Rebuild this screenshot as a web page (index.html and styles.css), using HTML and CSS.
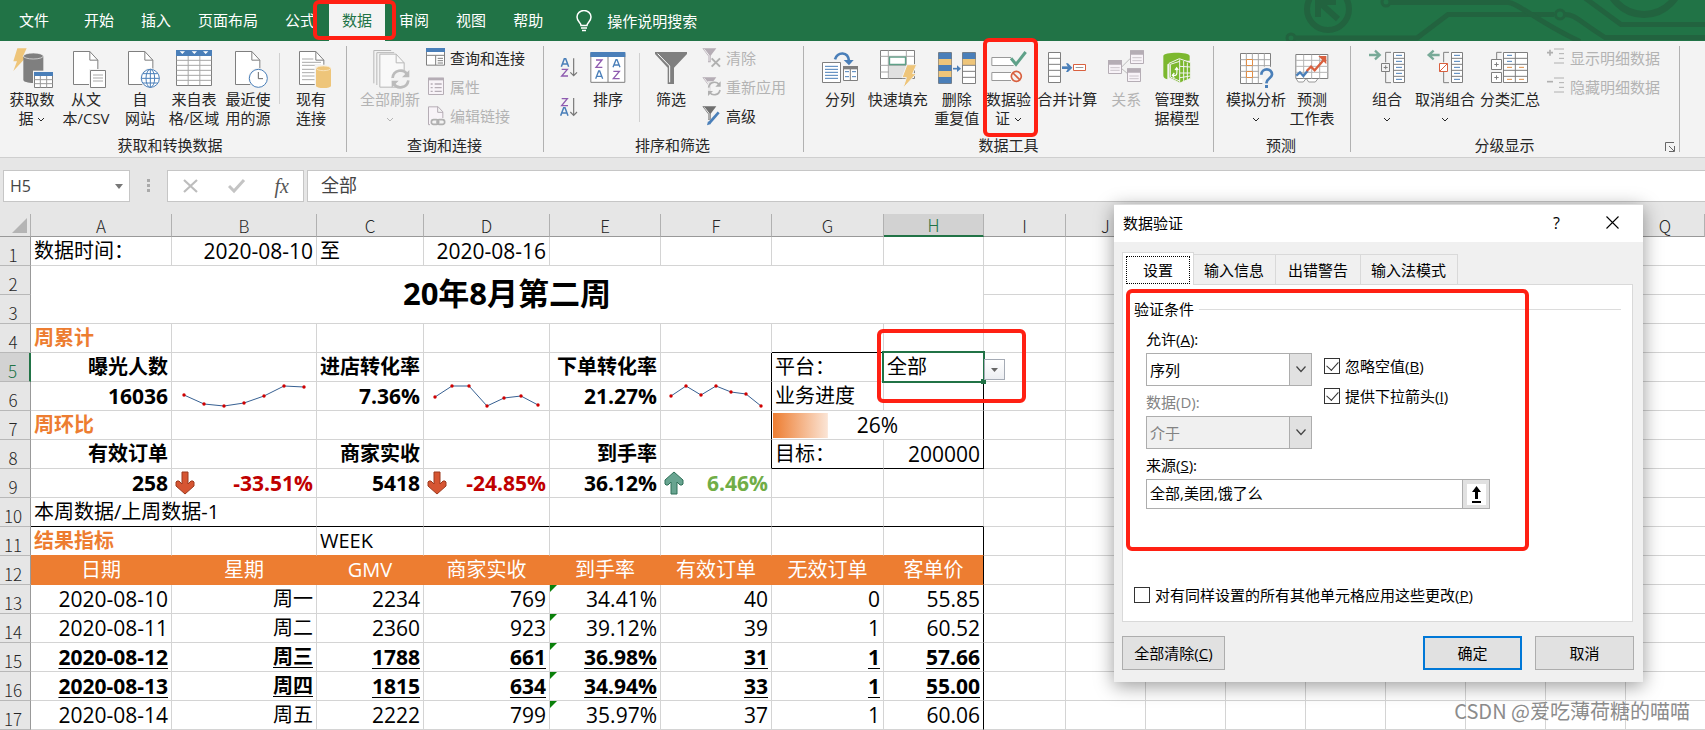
FILE: index.html
```html
<!DOCTYPE html>
<html lang="zh-CN">
<head>
<meta charset="utf-8">
<title>数据验证</title>
<link rel="stylesheet" href="styles.css">
</head>
<body>
<svg class="defs" aria-hidden="true">
  <symbol id="page" viewBox="0 0 78 104" overflow="visible"><path d="M1.5 1.5h49l24 26v73h-73z" fill="#fff" stroke="#7f7f7f" stroke-width="3"/><path d="M50.500 1.500v26h24" fill="none" stroke="#7f7f7f" stroke-width="3"/></symbol>
  <symbol id="down" viewBox="0 0 20 24"><path d="M7 1h6v12l3-3h2l1 1v4l-9 8-9-8v-4l1-1h2l3 3z" fill="#d65532" stroke="#9c3a1f"/></symbol>
  <symbol id="up" viewBox="0 0 20 24"><path d="M7 23h6V11l3 3h2l1-1V9l-9-8-9 8v4l1 1h2l3-3z" fill="#68a490" stroke="#2f7058"/></symbol>
  <symbol id="chev" viewBox="0 0 8 6"><path d="M1 1l3 3 3-3" fill="none" stroke="currentColor" stroke-width="1"/></symbol>
</svg>

<header class="menubar">
  <svg class="circuit" viewBox="0 0 430 41" aria-hidden="true">
    <g fill="none" stroke="#22633f" stroke-width="5">
      <circle cx="53" cy="9" r="21" stroke-width="6"/>
      <path d="M63 19L44 2M43 17V2h18" stroke-width="6"/>
      <circle cx="16" cy="38" r="4" stroke-width="3"/><path d="M21 38h121l31-23.500h106"/>
      <circle cx="285" cy="14.500" r="4.500" stroke-width="3"/><path d="M290 14.500c10 0 12 5 40 23h100"/>
      <circle cx="111" cy="2" r="4" stroke-width="3"/><path d="M115 2.500h118c10 0 30 20 72 39M310-2l36 26.500h84"/>
      <circle cx="369" cy="-23" r="37.500" stroke-width="7"/>
    </g>
  </svg>
  <nav class="tabs">
    <button class="tab file">文件</button>
    <button class="tab">开始</button>
    <button class="tab">插入</button>
    <button class="tab">页面布局</button>
    <button class="tab">公式</button>
    <button class="tab active">数据<span class="ring ring-tab"></span></button>
    <button class="tab">审阅</button>
    <button class="tab">视图</button>
    <button class="tab">帮助</button>
  </nav>
  <button class="tell"><svg width="16" height="22" viewBox="0 0 16 22"><path d="M5 15.500c0-3-4-4-4-8.500a7 6.500 0 0 1 14 0c0 4.500-4 5.500-4 8.500zM5 18h6M6 20.500h4" fill="none" stroke="#fff" stroke-width="1.500"/></svg>操作说明搜索</button>
</header>

<section class="ribbon">
  <div class="group g1">
    <div class="tools">
      <button class="big w54"><svg viewBox="36 144 120 120"><path d="M52 145h28l-12 26h11l-39 42 11-29H40z" fill="#eec57a"/><path d="M70 168v72c0 5 14 9 30 9h30v-81z" fill="#7f7f7f"/><ellipse cx="100" cy="168" rx="30" ry="9" fill="#7f7f7f" stroke="#f3f3f3" stroke-width="2"/><path d="M99 212h62v54H99z" fill="#f3f3f3"/><path d="M103.500 217.500h54v45h-54z" fill="#fff" stroke="#7f7f7f" stroke-width="3"/><path d="M102 216h57v12h-57z" fill="#4a7fb9"/><path d="M121 228v35M140 228v35M103 239h55M103 251h55" stroke="#999" stroke-width="3"/></svg><span>获取数<br>据 <svg class="chev"><use href="#chev"/></svg></span></button>
      <button class="big w54"><svg viewBox="198 144 120 120"><use href="#page" x="219" y="153" width="78" height="104"/><path d="M267 207h52v58h-52z" fill="#f3f3f3"/><path d="M271.500 211.500h45v51h-45z" fill="#fff" stroke="#7f7f7f" stroke-width="3"/><path d="M279 225h30M279 234h30M279 243h30" stroke="#999" stroke-width="2.500"/></svg><span>从文<br>本/CSV</span></button>
      <button class="big w54"><svg viewBox="360 144 120 120"><use href="#page" x="384" y="153" width="78" height="104"/><circle cx="451" cy="235" r="31" fill="#f3f3f3"/><g fill="#fff" stroke="#4a7fb9" stroke-width="3"><circle cx="451" cy="235" r="27"/><ellipse cx="451" cy="235" rx="13" ry="27"/><path d="M451 208v54M424 235h54M429 221h44M429 249h44" fill="none"/></g></svg><span>自<br>网站</span></button>
      <button class="big w54"><svg viewBox="522 144 120 120"><path d="M529.500 151.500h105v105h-105z" fill="#fff" stroke="#7f7f7f" stroke-width="3"/><path d="M530 181h104M530 196h104M530 211h104M530 226h104M530 241h104M564.500 167v89M599.500 167v89" stroke="#a6a6a6" stroke-width="3"/><path d="M528 150h108v18H528z" fill="#4a7fb9"/><path d="M539 154h16l-8 8zM575 154h16l-8 8zM609 154h16l-8 8z" fill="#fff"/></svg><span>来自表<br>格/区域</span></button>
      <button class="big w54"><svg viewBox="684 144 120 120"><use href="#page" x="705" y="153" width="78" height="104"/><circle cx="775" cy="235" r="31" fill="#f3f3f3"/><circle cx="775" cy="235" r="27" fill="#fff" stroke="#4a7fb9" stroke-width="3"/><path d="M775 216v20h14" fill="none" stroke="#666" stroke-width="3"/></svg><span>最近使<br>用的源</span></button>
      <i class="bar short"></i>
      <button class="big w54"><svg viewBox="873 144 120 120"><use href="#page" x="897" y="153" width="78" height="104"/><path d="M906 177h34M906 187h57M906 196h57M906 208h38M906 218h38M906 228h38M906 239h38" stroke="#999" stroke-width="2.500"/><path d="M944 194h52v72h-52z" fill="#f3f3f3"/><path d="M948 205v52c0 4 10 7 22.500 7s22.500-3 22.500-7v-52z" fill="#eec57a"/><ellipse cx="970.500" cy="205" rx="21.500" ry="7" fill="#eec57a" stroke="#f9e8c8" stroke-width="2.500"/></svg><span>现有<br>连接</span></button>
    </div>
    <div class="caption">获取和转换数据</div>
  </div>
  <div class="group g2">
    <div class="tools">
      <button class="big w64" disabled><svg viewBox="89 144 120 120"><g opacity=".5"><path d="M100.500 250v-98.500h52M109.500 255v-97h52" fill="none" stroke="#7f7f7f" stroke-width="3"/><use href="#page" x="117" y="161" width="78" height="104"/></g><circle cx="180" cy="237" r="29" fill="#f3f3f3"/><path d="M157 234c2-25 34-29 43-11M204 241c-3 24-34 27-43 11" fill="none" stroke="#bcbcbc" stroke-width="8"/><path d="M207 210v22h-22zM154 263v-21h21z" fill="#bcbcbc"/></svg><span>全部刷新<br><svg class="chev"><use href="#chev"/></svg></span></button>
      <div class="stack">
        <button class="small"><svg viewBox="258 148 60 60"><path d="M259.500 149.500h54v50h-54z" fill="#fff" stroke="#7f7f7f" stroke-width="3"/><path d="M258 148h57v12h-57z" fill="#4a7fb9"/><path d="M287 171v28M261 170h52M293 179h16M293 186h16M293 193h16" stroke="#7f7f7f" stroke-width="3"/></svg>查询和连接</button>
        <button class="small" disabled><svg viewBox="258 234 60 60"><path d="M265.500 237.500h45v49h-45z" fill="#f8f3f8" stroke="#b5adb5" stroke-width="3"/><path d="M264 236h48v8h-48z" fill="#b5adb5"/><path d="M272 255h6M272 266h6M272 277h6M284 255h21M284 266h21M284 277h21" stroke="#b5adb5" stroke-width="4"/></svg>属性</button>
        <button class="small" disabled><svg viewBox="258 320 60 60"><path d="M270 376h-4.500v-53.500h29l14 15V356M293 322v17h16" fill="#f8f3f8" stroke="#b5adb5" stroke-width="3"/><path d="M275 360h38v20h-38z" fill="#f3f3f3"/><g fill="none" stroke="#b0b0b0" stroke-width="5"><rect x="274" y="361" width="22" height="14" rx="7"/><rect x="291" y="361" width="23" height="14" rx="7"/></g></svg>编辑链接</button>
      </div>
    </div>
    <div class="caption">查询和连接</div>
  </div>
  <div class="group g3">
    <div class="tools">
      <div class="sorts">
        <button aria-label="升序"><svg width="18" height="20" viewBox="660 176 54 60"><path d="M664 202l9-24h4l9 24M667 194h16" fill="none" stroke="#4a7fb9" stroke-width="4.500"/><path d="M665 210h17l-17 20h19" fill="none" stroke="#8e5bb0" stroke-width="4"/><path d="M701 177v52M691 219l10 10 10-10" fill="none" stroke="#777" stroke-width="3.500"/></svg></button>
        <button aria-label="降序"><svg width="18" height="20" viewBox="660 292 54 60"><path d="M665 297h17l-17 21h19" fill="none" stroke="#8e5bb0" stroke-width="4"/><path d="M662 348l9-24h4l9 24M665 340h16" fill="none" stroke="#4a7fb9" stroke-width="4.500"/><path d="M701 295v52M691 337l10 10 10-10" fill="none" stroke="#777" stroke-width="3.500"/></svg></button>
      </div>
      <button class="big w54"><svg viewBox="743 144 120 120"><path d="M751.500 160h102v87h-102z" fill="#fff" stroke="#7f7f7f" stroke-width="3"/><path d="M750 156h105v15H750z" fill="#4a7fb9"/><path d="M803 171v76" stroke="#7f7f7f" stroke-width="3"/><g fill="none" stroke-width="4"><path d="M767 180h18l-18 22h19M819 214h18l-18 22h19" stroke="#8e5bb0"/><path d="M766 236l9-23h3l9 23M769 229h14M818 202l9-23h3l9 23M821 195h14" stroke="#4a7fb9"/></g></svg><span>排序</span></button>
      <i class="bar tall"></i>
      <button class="big w54"><svg viewBox="933 144 120 120"><path d="M945 156h96v6l-39 41v49h-19v-49l-38-41z" fill="#7f7f7f"/><path d="M953 161l36 37v49" fill="none" stroke="#fff" stroke-width="3"/></svg><span>筛选</span></button>
      <div class="stack">
        <button class="small" disabled><svg viewBox="1086 146 60 60"><path d="M1087 147h42l-17 22v20h-8v-20z" fill="#b5adb5"/><path d="M1093 150l14 18v18" stroke="#fff" stroke-width="2.500" fill="none"/><path d="M1115 177l25 25M1140 177l-25 25" stroke="#b0b0b0" stroke-width="6"/></svg>清除</button>
        <button class="small" disabled><svg viewBox="1086 233 60 60"><path d="M1087 234h42l-17 22v20h-8v-20z" fill="#b5adb5"/><path d="M1093 237l14 18v18" stroke="#fff" stroke-width="2.500" fill="none"/><path d="M1103 245h42v45h-42z" fill="#f3f3f3" opacity=".7"/><path d="M1106 265c2-20 25-20 32-8M1140 272c-3 17-24 18-31 7" fill="none" stroke="#b0b0b0" stroke-width="5"/><path d="M1142 246v16h-16zM1104 290v-15h15z" fill="#b0b0b0"/></svg>重新应用</button>
        <button class="small"><svg viewBox="1086 320 60 60"><path d="M1087 321h42l-17 22v18h-8v-18z" fill="#6f6f6f"/><path d="M1093 324l14 18v18" stroke="#fff" stroke-width="2.500" fill="none"/><path d="M1108 371l28-32" stroke="#4a7fb9" stroke-width="8"/><path d="M1101 378l3-12 9 8z" fill="#4a7fb9"/></svg>高级</button>
      </div>
    </div>
    <div class="caption">排序和筛选</div>
  </div>
  <div class="group g4">
    <div class="tools">
      <button class="big w54"><svg viewBox="60 144 120 120"><g fill="#fff" stroke="#7f7f7f" stroke-width="3"><path d="M67.500 187.500h54v60h-54zM130.500 199.500h42v42h-42z"/><path d="M151 200v42"/></g><path d="M129 198h45v10h-45z" fill="#7f7f7f"/><path d="M75 199h39M75 208h39M75 217h39M75 226h39M75 235h39M135 215h12M135 230h12M156 215h12M156 230h12" stroke="#4a7fb9" stroke-width="3"/><path d="M105 178c8-23 39-25 42 5" fill="none" stroke="#4a7fb9" stroke-width="8"/><path d="M131 180h30l-14 16z" fill="#4a7fb9"/></svg><span>分列</span></button>
      <button class="big w62"><svg viewBox="234 144 120 120"><path d="M241.500 151.500h102v84h-102z" fill="#fff" stroke="#7f7f7f" stroke-width="3"/><path d="M241 169h102M241 196h102M241 216h102M265 151v85M319 151v85" stroke="#a6a6a6" stroke-width="3"/><path d="M267 198h50v36h-50z" fill="#e0e0e0"/><path d="M268.500 171.500h48v22h-48z" fill="#fff" stroke="#5fa189" stroke-width="4"/><path d="M321 194h29l-12 27h11l-40 44 10-32h-13z" fill="#eec57a" stroke="#f3f3f3" stroke-width="3"/></svg><span>快速填充</span></button>
      <button class="big w56"><svg viewBox="411 144 120 120"><path d="M415.500 157.500h39v93h-39zM487.500 157.500h39v93h-39z" fill="#fff" stroke="#7f7f7f" stroke-width="3"/><path d="M416 158h38v19h-38zM416 195h38v18h-38zM416 231h38v19h-38zM488 158h38v19h-38z" fill="#4a7fb9"/><path d="M416 177h38v18h-38zM416 213h38v18h-38zM488 177h38v18h-38z" fill="#eec57a"/><path d="M488 196h38M488 214h38M488 232h38" stroke="#7f7f7f" stroke-width="3"/><path d="M459 206h17" stroke="#4a7fb9" stroke-width="5"/><path d="M471 196l12 10-12 10z" fill="#4a7fb9"/></svg><span>删除<br>重复值</span></button>
      <button class="big w48"><svg viewBox="566 144 120 120"><path d="M632 172.500h-57.500v24H640M632 217.500h-57.500v24H632" fill="#fff" stroke="#999" stroke-width="3"/><path d="M632 175l15 18 29-37" fill="none" stroke="#5fa189" stroke-width="9"/><g fill="none" stroke="#d9603f" stroke-width="5"><circle cx="648" cy="229" r="15"/><path d="M638 219l20 20"/></g></svg><span>数据验<br>证 <svg class="chev"><use href="#chev"/></svg></span><i class="ring ring-tool"></i></button>
      <button class="big w70"><svg viewBox="741 144 120 120"><path d="M745.500 157.500h36v90h-36zM745 175h36M745 193h36M745 211h36M745 229h36" fill="#fff" stroke="#7f7f7f" stroke-width="3"/><path d="M786 203h20" stroke="#4a7fb9" stroke-width="8"/><path d="M798 190h6l13 13-13 13h-6l7-13z" fill="#4a7fb9"/><path d="M820.500 193.500h36v18h-36z" fill="#fff" stroke="#d9603f" stroke-width="3"/><path d="M827 202.500h23" stroke="#999" stroke-width="3"/></svg><span>合并计算</span></button>
      <button class="big w48" disabled><svg viewBox="918 144 120 120"><path d="M964 202l27-27M964 205l20 17" stroke="#bcbcbc" stroke-width="3"/><g fill="#f8f3f8" stroke="#b5adb5" stroke-width="3"><path d="M991.500 152.500h39v38h-39zM925.500 182.500h39v38h-39zM982.500 206.500h39v38h-39z"/><path d="M997 173h28M997 182h28M931 203h28M931 211h28M988 228h28M988 236h28" stroke-width="2"/></g><path d="M990 151h42v13h-42zM924 180h42v14h-42zM981 205h42v13h-42z" fill="#b5adb5"/></svg><span>关系</span></button>
      <button class="big w54"><svg viewBox="1070 144 120 120"><path d="M1089 168c0-13 79-13 79 0v14h-14l-53 11v45c-7-2-12-6-12-11z" fill="#7cb82f"/><path d="M1106 190l31-14 34 12v47l-32 14-33-16z" fill="#7cb82f" stroke="#f3f3f3" stroke-width="3"/><path d="M1138 178v68M1150 183v60M1161 188v50M1139 199l31 2M1139 219h31M1139 233l31-5M1110 193l28-9M1110 193v38l28 12" fill="none" stroke="#f3f3f3" stroke-width="3"/><path d="M1116 226h9c6-1 6-8 4-21M1124 210l5-7 5 7M1122 219l-6 7 6 7" fill="none" stroke="#fff" stroke-width="3.500"/></svg><span>管理数<br>据模型</span></button>
    </div>
    <div class="caption">数据工具</div>
  </div>
  <div class="group g5">
    <div class="tools">
      <button class="big w62"><svg viewBox="111 144 120 120"><path d="M124.500 160.500h90v90h-90z" fill="#fff" stroke="#7f7f7f" stroke-width="3"/><path d="M124 179h90M124 197h90M124 214h90M124 232h90M142 160v90M160 160v90M178 160v90M196 160v90" stroke="#a6a6a6" stroke-width="3"/><path d="M142.500 178.500h18v18h-18zM142.500 214.500h18v18h-18z" fill="#fff" stroke="#e08d45" stroke-width="3"/><path d="M180 200h46v66h-36v-30h-10z" fill="#f3f3f3"/><path d="M187 224c0-21 33-21 32 0-1 12-16 10-17 26" fill="none" stroke="#4a7fb9" stroke-width="8"/><path d="M198 255h9v9h-9z" fill="#4a7fb9"/></svg><span>模拟分析<br><svg class="chev"><use href="#chev"/></svg></span></button>
      <button class="big w56"><svg viewBox="284 144 120 120"><path d="M295.500 163.500h96v72h-96z" fill="#fff" stroke="#7f7f7f" stroke-width="3"/><path d="M296 181h95M296 199h95M296 217h95M319 164v72M343 164v72M367 164v72" stroke="#b5b5b5" stroke-width="3"/><path d="M297 237l6 9h15l7-9M328 237l6 9h20l7-9" fill="#fff" stroke="#999" stroke-width="3"/><path d="M297 227l11-10 10 11 13-16" fill="none" stroke="#4a7fb9" stroke-width="7"/><path d="M328 213l13-13 11 11 29-33" fill="none" stroke="#d9603f" stroke-width="7"/><path d="M363 168h24v25z" fill="#d9603f"/></svg><span>预测<br>工作表</span></button>
    </div>
    <div class="caption">预测</div>
  </div>
  <div class="group g6">
    <div class="tools">
      <button class="big w50"><svg viewBox="501 144 120 120"><path d="M507 165h32M525 152l14 13-14 13" fill="none" stroke="#78aa98" stroke-width="7"/><path d="M573 157h-16v30M557 216v32h16M544.500 190.500h24v24h-24zM551 202.500h12M557 196v12" fill="none" stroke="#7f7f7f" stroke-width="3"/><path d="M580.500 157.500h33v90h-33zM580 175h33M580 193h33M580 211h33M580 229h33" fill="#fff" stroke="#7f7f7f" stroke-width="3"/><path d="M588 166h18M588 184h18M588 202h18M588 220h18M588 238h18" stroke="#4a7fb9" stroke-width="3"/></svg><span>组合<br><svg class="chev"><use href="#chev"/></svg></span></button>
      <button class="big w66"><svg viewBox="675 144 120 120"><path d="M719 165h-32M701 152l-15 13 15 13" fill="none" stroke="#78aa98" stroke-width="7"/><path d="M747 157h-16v30M731 216v32h16" fill="none" stroke="#7f7f7f" stroke-width="3"/><path d="M718.500 190.500h24v24h-24zM719 214l23-23" fill="#fff" stroke="#d9603f" stroke-width="3"/><path d="M754.500 157.500h33v90h-33zM754 175h33M754 193h33M754 211h33M754 229h33" fill="#fff" stroke="#7f7f7f" stroke-width="3"/><path d="M762 166h18M762 184h18M762 202h18M762 220h18M762 238h18" stroke="#4a7fb9" stroke-width="3"/></svg><span>取消组合<br><svg class="chev"><use href="#chev"/></svg></span></button>
      <button class="big w64"><svg viewBox="870 144 120 120"><path d="M905 157h-15v20" fill="none" stroke="#7f7f7f" stroke-width="3"/><path d="M910.500 157.500h72v90h-72zM910 175h73M910 193h73M910 211h73M910 229h73M946 157v90M874.500 178.500h30v30h-30zM874.500 217.500h30v30h-30zM883 193.500h13M889.500 187v13M883 232.500h13M889.500 226v13" fill="#fff" stroke="#7f7f7f" stroke-width="3"/><path d="M921 166h15M921 184h15" stroke="#4a7fb9" stroke-width="3"/><path d="M921 202h15M957 202h15M921 238h15M957 238h15" stroke="#e08d45" stroke-width="3"/></svg><span>分类汇总</span></button>
      <div class="stack">
        <button class="small" disabled><svg viewBox="1044 148 60 60"><path d="M1047 162h18M1056 153v18" stroke="#b0b0b0" stroke-width="5"/><path d="M1068 151h30M1083 165h15M1083 179h15M1068 193h30" stroke="#b0b0b0" stroke-width="3"/></svg>显示明细数据</button>
        <button class="small" disabled><svg viewBox="1044 235 60 60"><path d="M1047 249h18" stroke="#b0b0b0" stroke-width="5"/><path d="M1068 238h30M1083 252h15M1083 266h15M1068 280h30" stroke="#b0b0b0" stroke-width="3"/></svg>隐藏明细数据</button>
      </div>
    </div>
    <div class="caption">分级显示</div>
    <button class="launch" aria-label="分级显示设置"><svg width="10" height="10" viewBox="0 0 10 10"><path d="M.5 9V.5H9M4 4l5 5M9.500 4v5.500H4" fill="none" stroke="#666"/></svg></button>
  </div>
</section>

<section class="formula">
  <div class="namebox"><input aria-label="名称框" value="H5"><button aria-label="名称列表"><svg width="8" height="5" viewBox="0 0 8 5"><path d="M0 0h8L4 5z" fill="#777"/></svg></button></div>
  <svg class="grip" width="4" height="14" viewBox="0 0 4 14"><path d="M0 0h3v3H0zM0 5h3v3H0zM0 10h3v3H0z" fill="#aaa"/></svg>
  <div class="fx">
    <button aria-label="取消输入"><svg width="18" height="16" viewBox="0 0 18 16"><path d="M2 2l13 12M15 2L2 14" stroke="#bdbdbd" stroke-width="2.200"/></svg></button>
    <button aria-label="输入"><svg width="18" height="16" viewBox="0 0 18 16"><path d="M1 8l5 5L16 2" fill="none" stroke="#c4c4c4" stroke-width="3"/></svg></button>
    <button class="fn">fx</button>
  </div>
  <input class="entry" aria-label="编辑栏" value="全部">
</section>

<main class="sheet">
<table>
  <colgroup><col class="c0"><col class="ca"><col class="cb"><col class="cc"><col class="cd"><col class="ce"><col class="ce"><col class="cg"><col class="ch"><col class="ci"><col class="cj"><col class="ck"><col></colgroup>
  <thead><tr><th class="corner"><svg width="15" height="15" viewBox="0 0 15 15"><path d="M15 0v15H0z" fill="#b4b4b4"/></svg></th><th>A</th><th>B</th><th>C</th><th>D</th><th>E</th><th>F</th><th>G</th><th class="sel">H</th><th>I</th><th>J</th><th></th><th>Q</th></tr></thead>
  <tbody>
  <tr><th>1</th><td>数据时间：</td><td class="n">2020-08-10</td><td>至</td><td class="n">2020-08-16</td><td></td><td></td><td></td><td></td><td></td><td class="rest" colspan="3"></td></tr>
  <tr><th>2</th><td class="title" colspan="8" rowspan="2">20年8月第二周</td><td></td><td class="rest" colspan="3"></td></tr>
  <tr><th>3</th><td></td><td class="rest" colspan="3"></td></tr>
  <tr><th>4</th><td class="sec">周累计</td><td></td><td></td><td></td><td></td><td></td><td class="kb"></td><td class="kb"></td><td></td><td class="rest" colspan="3"></td></tr>
  <tr><th class="sel">5</th><td class="h">曝光人数</td><td></td><td class="h">进店转化率</td><td></td><td class="h">下单转化率</td><td class="kr"></td><td>平台：</td><td class="kr cell">全部<i class="cursor"></i><button class="drop" aria-label="选择平台"><svg width="7" height="4" viewBox="0 0 7 4"><path d="M0 0h7L3.500 4z" fill="#666"/></svg></button><i class="ring ring-cell"></i></td><td></td><td class="rest" colspan="3"></td></tr>
  <tr><th>6</th><td class="n b">16036</td>
    <td class="spark"><svg width="144" height="28"><path d="M12 13l20 9 20 2 20-3 20-7 20-10 20 1"/><g><circle cx="12" cy="13" r="1.700"/><circle cx="32" cy="22" r="1.700"/><circle cx="52" cy="24" r="1.700"/><circle cx="72" cy="21" r="1.700"/><circle cx="92" cy="14" r="1.700"/><circle cx="112" cy="4" r="1.700"/><circle cx="132" cy="5" r="1.700"/></g></svg></td>
    <td class="n b">7.36%</td>
    <td class="spark"><svg width="125" height="28"><path d="M11 15L28 4h17l18 20 17-8 17-2 17 9"/><g><circle cx="11" cy="15" r="1.700"/><circle cx="28" cy="4" r="1.700"/><circle cx="45" cy="4" r="1.700"/><circle cx="63" cy="24" r="1.700"/><circle cx="80" cy="16" r="1.700"/><circle cx="97" cy="14" r="1.700"/><circle cx="114" cy="23" r="1.700"/></g></svg></td>
    <td class="n b">21.27%</td>
    <td class="spark kr"><svg width="110" height="28"><path d="M10 14L25 4l15 9 15-9 15 6 15 2 15 12"/><g><circle cx="10" cy="14" r="1.700"/><circle cx="25" cy="4" r="1.700"/><circle cx="40" cy="13" r="1.700"/><circle cx="55" cy="4" r="1.700"/><circle cx="70" cy="10" r="1.700"/><circle cx="85" cy="12" r="1.700"/><circle cx="100" cy="24" r="1.700"/></g></svg></td>
    <td>业务进度</td><td class="kr"></td><td></td><td class="rest" colspan="3"></td></tr>
  <tr><th>7</th><td class="sec">周环比</td><td></td><td></td><td></td><td></td><td class="kr"></td><td class="progress kr" colspan="2">26%</td><td></td><td class="rest" colspan="3"></td></tr>
  <tr><th>8</th><td class="h">有效订单</td><td></td><td class="h">商家实收</td><td></td><td class="h">到手率</td><td class="kr"></td><td class="kb">目标：</td><td class="n kb kr">200000</td><td></td><td class="rest" colspan="3"></td></tr>
  <tr><th>9</th><td class="n b">258</td><td class="n b red"><div class="trend"><svg width="20" height="24"><use href="#down"/></svg>-33.51%</div></td><td class="n b">5418</td><td class="n b red"><div class="trend"><svg width="20" height="24"><use href="#down"/></svg>-24.85%</div></td><td class="n b">36.12%</td><td class="n b green"><div class="trend"><svg width="20" height="24"><use href="#up"/></svg>6.46%</div></td><td></td><td></td><td></td><td class="rest" colspan="3"></td></tr>
  <tr class="ruled"><th>10</th><td colspan="2">本周数据/上周数据-1</td><td></td><td></td><td></td><td></td><td></td><td></td><td class="plain"></td><td class="rest plain" colspan="3"></td></tr>
  <tr class="pre"><th>11</th><td class="sec">结果指标</td><td></td><td>WEEK</td><td></td><td></td><td></td><td></td><td class="kr"></td><td class="plain"></td><td class="rest plain" colspan="3"></td></tr>
  <tr class="orange"><th>12</th><td>日期</td><td>星期</td><td>GMV</td><td>商家实收</td><td>到手率</td><td>有效订单</td><td>无效订单</td><td>客单价</td><td class="plain"></td><td class="rest plain" colspan="3"></td></tr>
  <tr class="n"><th>13</th><td>2020-08-10</td><td class="zh">周一</td><td>2234</td><td>769</td><td class="err">34.41%</td><td>40</td><td>0</td><td class="kr">55.85</td><td></td><td class="rest" colspan="3"></td></tr>
  <tr class="n"><th>14</th><td>2020-08-11</td><td class="zh">周二</td><td>2360</td><td>923</td><td class="err">39.12%</td><td>39</td><td>1</td><td class="kr">60.52</td><td></td><td class="rest" colspan="3"></td></tr>
  <tr class="n mark"><th>15</th><td>2020-08-12</td><td class="zh">周三</td><td>1788</td><td>661</td><td class="err">36.98%</td><td>31</td><td>1</td><td class="kr">57.66</td><td></td><td class="rest" colspan="3"></td></tr>
  <tr class="n mark"><th>16</th><td>2020-08-13</td><td class="zh">周四</td><td>1815</td><td>634</td><td class="err">34.94%</td><td>33</td><td>1</td><td class="kr">55.00</td><td></td><td class="rest" colspan="3"></td></tr>
  <tr class="n"><th>17</th><td>2020-08-14</td><td class="zh">周五</td><td>2222</td><td>799</td><td class="err">35.97%</td><td>37</td><td>1</td><td class="kr">60.06</td><td></td><td class="rest" colspan="3"></td></tr>
  </tbody>
</table>
</main>

<form class="dialog" role="dialog" aria-label="数据验证">
  <div class="dtitle"><span>数据验证</span><button type="button" class="help">?</button><button type="button" aria-label="关闭"><svg width="13" height="13" viewBox="0 0 13 13"><path d="M.5.5l12 12M12.500.5l-12 12" stroke="#000" stroke-width="1.100"/></svg></button></div>
  <div class="dbody">
    <div class="dtabs"><button type="button" class="on"><span>设置</span></button><button type="button">输入信息</button><button type="button">出错警告</button><button type="button">输入法模式</button></div>
    <div class="panel">
      <i class="ring ring-panel"></i>
      <div class="legend">验证条件</div>
      <div class="fields">
        <div class="left">
          <label for="allow">允许(<u>A</u>):</label>
          <div class="select"><select id="allow"><option>序列</option></select><svg width="10" height="7" viewBox="0 0 10 7"><path d="M.5.5L5 5.500 9.500.5" fill="none" stroke="#444" stroke-width="1.200"/></svg></div>
          <label class="dim" for="data">数据(D):</label>
          <div class="select"><select id="data" disabled><option>介于</option></select><svg width="10" height="7" viewBox="0 0 10 7"><path d="M.5.5L5 5.500 9.500.5" fill="none" stroke="#444" stroke-width="1.200"/></svg></div>
          <label for="source">来源(<u>S</u>):</label>
        </div>
        <div class="right">
          <label class="check"><input type="checkbox" checked>忽略空值(<u>B</u>)</label>
          <label class="check"><input type="checkbox" checked>提供下拉箭头(<u>I</u>)</label>
        </div>
      </div>
      <div class="source"><input id="source" value="全部,美团,饿了么"><button type="button" aria-label="选择区域"><svg width="19" height="21" viewBox="0 0 19 21"><path d="M0 0h19v21H0z" fill="#fff"/><path d="M9.500 2l4.500 6h-3v7H8V8H5zM5 17h9v2H5z"/></svg></button></div>
      <label class="check same"><input type="checkbox">对有同样设置的所有其他单元格应用这些更改(<u>P</u>)</label>
    </div>
    <div class="actions"><button type="button" class="clear">全部清除(<u>C</u>)</button><button type="submit" class="ok">确定</button><button type="button">取消</button></div>
  </div>
</form>
<div class="watermark">CSDN @爱吃薄荷糖的喵喵</div>
</body>
</html>
```
FILE: styles.css
```css
* { box-sizing: border-box; }
body {
  margin: 0;
  min-height: 100vh;
  position: relative;
  overflow: hidden;
  background: #e6e6e6;
  color: #000;
  font: 15px/20px "Open Sans", "Noto Sans CJK SC", sans-serif;
}
button, input, select { font: inherit; color: inherit; margin: 0; padding: 0; border: 0; background: none; border-radius: 0; }
svg { flex: none; }
.defs { position: absolute; width: 0; height: 0; }
.ring { position: absolute; border: 4px solid #ff2013; border-radius: 6px; z-index: 5; pointer-events: none; }

/* menu bar */
.menubar { position: relative; display: flex; height: 41px; background: #217346; color: #fff; }
.circuit { position: absolute; right: 0; top: 0; width: 430px; height: 41px; }
.tabs { display: flex; gap: 1px; }
.tab { padding: 0 13px 1px; }
.tab.file { padding: 0 21px 1px 19px; }
.tab.active { position: relative; margin-top: 3px; padding-bottom: 4px; background: #f3f3f3; color: #217346; }
.ring-tab { left: -16px; right: -11px; top: -3px; bottom: 1px; }
.tell { display: flex; align-items: center; gap: 15px; padding-left: 20px; }

/* ribbon */
.ribbon { display: flex; height: 117px; padding-top: 5px; background: #f3f3f3; border-bottom: 1px solid #cfcfcf; color: #262626; }
.group { position: relative; flex: none; display: flex; flex-direction: column; height: 106px; border-right: 1px solid #b1b1b1; }
.tools { display: flex; flex: none; height: 88px; }
.caption { text-align: center; line-height: 22px; }
.g1 { width: 347px; padding: 0 5px; }
.g1 .caption { padding-right: 6px; }
.g2 { width: 197px; padding-left: 11px; }
.g2 .caption { padding-right: 12px; }
.g3 { width: 260px; padding-left: 14px; }
.g3 .caption { padding-right: 16px; }
.g4 { width: 410px; padding: 0 9px; }
.g5 { width: 137px; padding: 0 12px; }
.g5 .caption { padding-right: 2px; }
.g6 { width: 329px; padding-left: 11px; }
.g6 .caption { padding-right: 32px; }
.big { position: relative; display: flex; flex-direction: column; align-items: center; padding-top: 2px; line-height: 19px; white-space: nowrap; }
.big > svg { width: 40px; height: 40px; margin-bottom: 2px; overflow: visible; }
.big .chev { width: 8px; height: 6px; vertical-align: middle; }
button:disabled { color: #b3b3b3; }
.w48 { width: 48px; } .w50 { width: 50px; } .w54 { width: 54px; } .w56 { width: 56px; }
.w62 { width: 62px; } .w64 { width: 64px; } .w66 { width: 66px; } .w70 { width: 70px; }
.bar { width: 1px; margin: 7px 4px 0; background: #d0d0d0; }
.bar.short { height: 51px; }
.bar.tall { height: 69px; }
.stack { display: flex; flex-direction: column; padding-left: 4px; margin-top: -3px; }
.small { display: flex; align-items: center; gap: 4px; height: 29px; white-space: nowrap; }
.small svg { width: 20px; height: 20px; }
.sorts { display: flex; flex-direction: column; gap: 19px; padding: 12px 3px 0 2px; }
.sorts button { height: 20px; }
.sorts svg { display: block; }
.ring-tool { left: -2px; right: -6px; top: -8px; height: 99px; }
.launch { position: absolute; right: 4px; bottom: 0; line-height: 0; }

/* formula bar */
.formula { display: flex; align-items: center; padding: 12px 0 12px 3px; color: #444; }
.namebox, .fx, .entry { height: 32px; border: 1px solid #c6c6c6; background: #fff; }
.namebox { display: flex; align-items: center; width: 127px; padding: 0 6px; font-size: 16px; }
.namebox input { flex: 1; min-width: 0; }
.namebox svg, .fx svg { display: block; }
.grip { margin: 0 16px 0 17px; }
.fx { display: flex; align-items: center; justify-content: space-around; width: 137px; margin-right: 3px; }
.fn { font: italic 20px/28px "Liberation Serif", serif; color: #555; }
.entry { flex: 1; min-width: 0; padding: 0 0 4px 13px; border-right: 0; font-size: 18px; }

/* grid */
.sheet { background: #fff; }
table { width: 100%; table-layout: fixed; border-collapse: separate; border-spacing: 0; font-size: 20px; line-height: 28px; }
.c0 { width: 31px; } .ca { width: 141px; } .cb { width: 145px; } .cc { width: 107px; } .cd { width: 126px; }
.ce { width: 111px; } .cg { width: 112px; } .ch { width: 100px; } .ci { width: 82px; } .cj { width: 80px; } .ck { width: 480px; }
th { padding: 0; background: #e6e6e6; color: #262626; font: 300 17px/20px "Noto Sans CJK SC", sans-serif; }
thead th { height: 23px; padding-top: 1px; border-right: 1px solid #b1b1b1; border-bottom: 1px solid #999; }
thead th.sel { background: #d2d2d2; color: #217346; border-bottom: 2px solid #217346; }
.corner { text-align: right; padding-right: 3px; line-height: 0; }
tbody tr { height: 29px; }
tbody th { padding-top: 8px; padding-right: 4px; border-right: 1px solid #999; border-bottom: 1px solid #b8b8b8; }
tbody th.sel { background: #d2d2d2; color: #217346; border-right: 2px solid #217346; }
td { height: 29px; padding: 0 3px; border-right: 1px solid #d4d4d4; border-bottom: 1px solid #d4d4d4; white-space: nowrap; }
td.rest { border-right: 0; background: repeating-linear-gradient(to right, transparent 0 79px, #d4d4d4 79px 80px); }
td.title { font-size: 31px; font-weight: 700; text-align: center; padding-bottom: 4px; }
td.sec { color: #ed7d31; font-weight: 700; }
td.h { font-weight: 700; text-align: right; }
td.n, tr.n td { font-size: 21px; text-align: right; }
tr.n td.zh { font-size: 20px; }
td.b { font-weight: 700; }
td.red { color: #c00000; }
td.green { color: #70ad47; }
td.kb, .ruled td { border-bottom-color: #000; }
td.kr { border-right-color: #000; }
.pre td { border-bottom-color: #ed7d31; }
.orange td { background: #ed7d31; border-color: #ed7d31; color: #fff; text-align: center; }
.orange td:nth-child(9) { border-right-color: #000; }
.ruled td.plain, .pre td.plain, .orange td.plain { border-color: #d4d4d4; }
.orange td.plain { background-color: #fff; }
.orange td.rest { background: repeating-linear-gradient(to right, transparent 0 79px, #d4d4d4 79px 80px); }
.mark td { font-weight: 700; text-decoration: underline; text-underline-offset: 3px; text-decoration-thickness: 1px; }
td.progress { font-size: 21px; text-align: center; background: linear-gradient(to right, #ed7d31, #fbe5d6) 1px 2px / 26% 25px no-repeat; }
td.err { position: relative; }
td.err::before { content: ""; position: absolute; left: 0; top: 0; border-top: 7px solid #0a800a; border-right: 7px solid transparent; }
td.spark { padding: 0; }
.spark svg { display: block; }
.spark path { fill: none; stroke: #376092; }
.spark circle { fill: #d00000; }
.trend { display: flex; justify-content: space-between; align-items: center; }
.cell { position: relative; }
.cursor { position: absolute; inset: -2px; border: 2px solid #217346; }
.cursor::after { content: ""; position: absolute; right: -3px; bottom: -3px; width: 5px; height: 5px; background: #217346; }
.drop { position: absolute; left: 100%; top: 6px; margin-left: 1px; width: 21px; height: 21px; border: 1px solid #a5abb5; background: linear-gradient(#fff, #eceef2); line-height: 0; display: grid; place-items: center; }
.ring-cell { left: -7px; top: -24px; width: 149px; height: 74px; }

/* dialog */
.dialog { position: absolute; z-index: 10; top: 204px; right: 62px; width: 529px; background: #f0f0f0; border-top: 1px solid #ddd; box-shadow: 0 4px 18px rgba(0, 0, 0, .4); }
.dtitle { display: flex; align-items: center; height: 37px; padding: 0 24px 1px 9px; background: #fff; }
.dtitle span { flex: 1; }
.dtitle .help { margin-right: 46px; font-size: 16px; }
.dbody { padding: 10px 9px 12px 8px; }
.dtabs { display: flex; align-items: flex-end; height: 33px; }
.dtabs button { height: 31px; padding: 0 11px 1px 10px; border: 1px solid #d9d9d9; border-left: 0; border-bottom: 0; }
.dtabs button:nth-child(3) { padding: 0 12px 1px; }
.dtabs .on { position: relative; z-index: 1; height: 33px; padding: 3px; border-left: 1px solid #d9d9d9; background: #fff; }
.dtabs .on span { display: block; padding: 3px 16px; border: 1px dotted #000; }
.panel { position: relative; width: 511px; margin-top: -1px; padding: 14px 11px 16px 11px; border: 1px solid #d9d9d9; background: #fff; }
.ring-panel { left: 3px; top: 4px; width: 403px; height: 262px; }
.legend { display: flex; align-items: center; gap: 5px; }
.legend::after { content: ""; flex: 1; height: 1px; background: #dcdcdc; }
.fields { display: flex; gap: 12px; padding: 10px 0 0 12px; }
.left { width: 166px; }
.left label { display: block; }
.left .dim { color: #838383; }
.select { position: relative; margin: 4px 0 6px; }
.select select { display: block; width: 100%; height: 33px; padding-left: 3px; appearance: none; border: 1px solid #adadad; background: linear-gradient(#adadad, #adadad) right 21px top / 1px 100% no-repeat, linear-gradient(#e1e1e1, #e1e1e1) right / 21px 100% no-repeat, #fff; }
.select select:disabled { color: #838383; opacity: 1; background-color: #f0f0f0; }
.select svg { position: absolute; right: 6px; top: 13px; pointer-events: none; }
.right { display: flex; flex-direction: column; gap: 10px; padding-top: 27px; }
.check { display: flex; align-items: center; }
.check input { appearance: none; flex: none; width: 16px; height: 16px; margin-right: 5px; border: 1px solid #333; background: #fff; display: grid; place-items: center; }
.check input:checked::before { content: ""; width: 6px; height: 10px; margin-bottom: 3px; border: solid #333; border-width: 0 1px 1px 0; transform: rotate(42deg); }
.source { display: flex; width: 344px; height: 30px; margin: 4px 0 76px 12px; border: 1px solid #adadad; }
.source input { flex: 1; min-width: 0; padding: 0 0 3px 3px; }
.source button { width: 27px; background: #e1e1e1; border-left: 1px solid #adadad; line-height: 0; }
.actions { display: flex; gap: 13px; padding-top: 14px; }
.actions button { width: 99px; height: 34px; border: 1px solid #adadad; background: #e1e1e1; }
.actions .clear { width: 103px; margin-right: auto; }
.actions .ok { border: 2px solid #0078d7; }
.watermark { position: absolute; right: 15px; bottom: 5px; font: 20px/28px "Noto Sans CJK SC", sans-serif; color: #8c8c8c; }
```
